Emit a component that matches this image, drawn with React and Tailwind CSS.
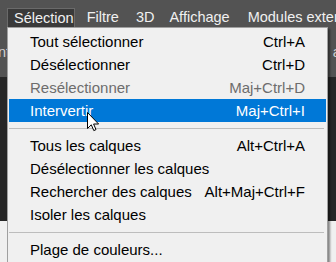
import React from "react";

const font = { fontFamily: '"Liberation Sans", Arial, sans-serif' };

function Row({ label, shortcut, disabled, active }) {
  const color = active ? "text-white bg-[#0078d7]" : disabled ? "text-[#6d6d6d]" : "text-black";
  return (
    <div className={`h-[23px] mx-px flex items-center justify-between pl-[21px] pr-[21px] text-[15px] leading-none ${color}`}>
      <span>{label}</span>
      {shortcut ? <span>{shortcut}</span> : null}
    </div>
  );
}

function Sep() {
  return (
    <div className="h-[12px] flex items-center mx-px">
      <div className="h-px w-[315px] bg-[#bdbdbd]" />
    </div>
  );
}

export default function App() {
  return (
    <div className="w-[336px] h-[262px] relative overflow-hidden bg-[#262626]" style={font}>
      <div className="h-[27px] bg-[#535353] flex items-end text-[14.5px] text-[#f0f0f0] leading-none">
        <div className="ml-[7px] h-[19px] w-[73px] bg-[#3a3a3a] border border-b-0 border-[#6a6a6a] flex items-center pl-[6px]">Sélection</div>
        <div className="h-[19px] flex items-center pl-[12px]">Filtre</div>
        <div className="h-[19px] flex items-center pl-[17px]">3D</div>
        <div className="h-[19px] flex items-center pl-[15px]">Affichage</div>
        <div className="h-[19px] flex items-center pl-[18px] whitespace-nowrap">Modules externes</div>
      </div>
      <div className="h-[50px] bg-[#535353] flex items-center justify-between text-[14.5px] text-[#d0d0d0] leading-none">
        <span className="-ml-[2px]">nt</span>
        <span className="mr-[-8px]">al</span>
      </div>
      <div className="h-[144px] bg-[#262626]" />
      <div className="h-[41px] bg-[#f0f0f0]" />

      <div className="absolute left-[7px] top-[27px] w-[321px] h-[240px] bg-[#f0f0f0] border border-[#a0a0a0] pt-[2px] shadow-[2px_2px_2px_rgba(0,0,0,0.45)]">
        <Row label="Tout sélectionner" shortcut="Ctrl+A" />
        <Row label="Désélectionner" shortcut="Ctrl+D" />
        <Row label="Resélectionner" shortcut="Maj+Ctrl+D" disabled />
        <Row label="Intervertir" shortcut="Maj+Ctrl+I" active />
        <Sep />
        <Row label="Tous les calques" shortcut="Alt+Ctrl+A" />
        <Row label="Désélectionner les calques" />
        <Row label="Rechercher des calques" shortcut="Alt+Maj+Ctrl+F" />
        <Row label="Isoler les calques" />
        <Sep />
        <Row label="Plage de couleurs..." />
      </div>

      <svg className="absolute left-[87px] top-[112px]" width="13" height="20" viewBox="0 0 13 20">
        <path d="M0.5 0.5 L0.5 16.5 L4.3 12.8 L6.8 18.6 L9 17.6 L6.6 12 L11.6 12 Z" fill="#fff" stroke="#000" strokeWidth="1" strokeLinejoin="miter" />
      </svg>
    </div>
  );
}
